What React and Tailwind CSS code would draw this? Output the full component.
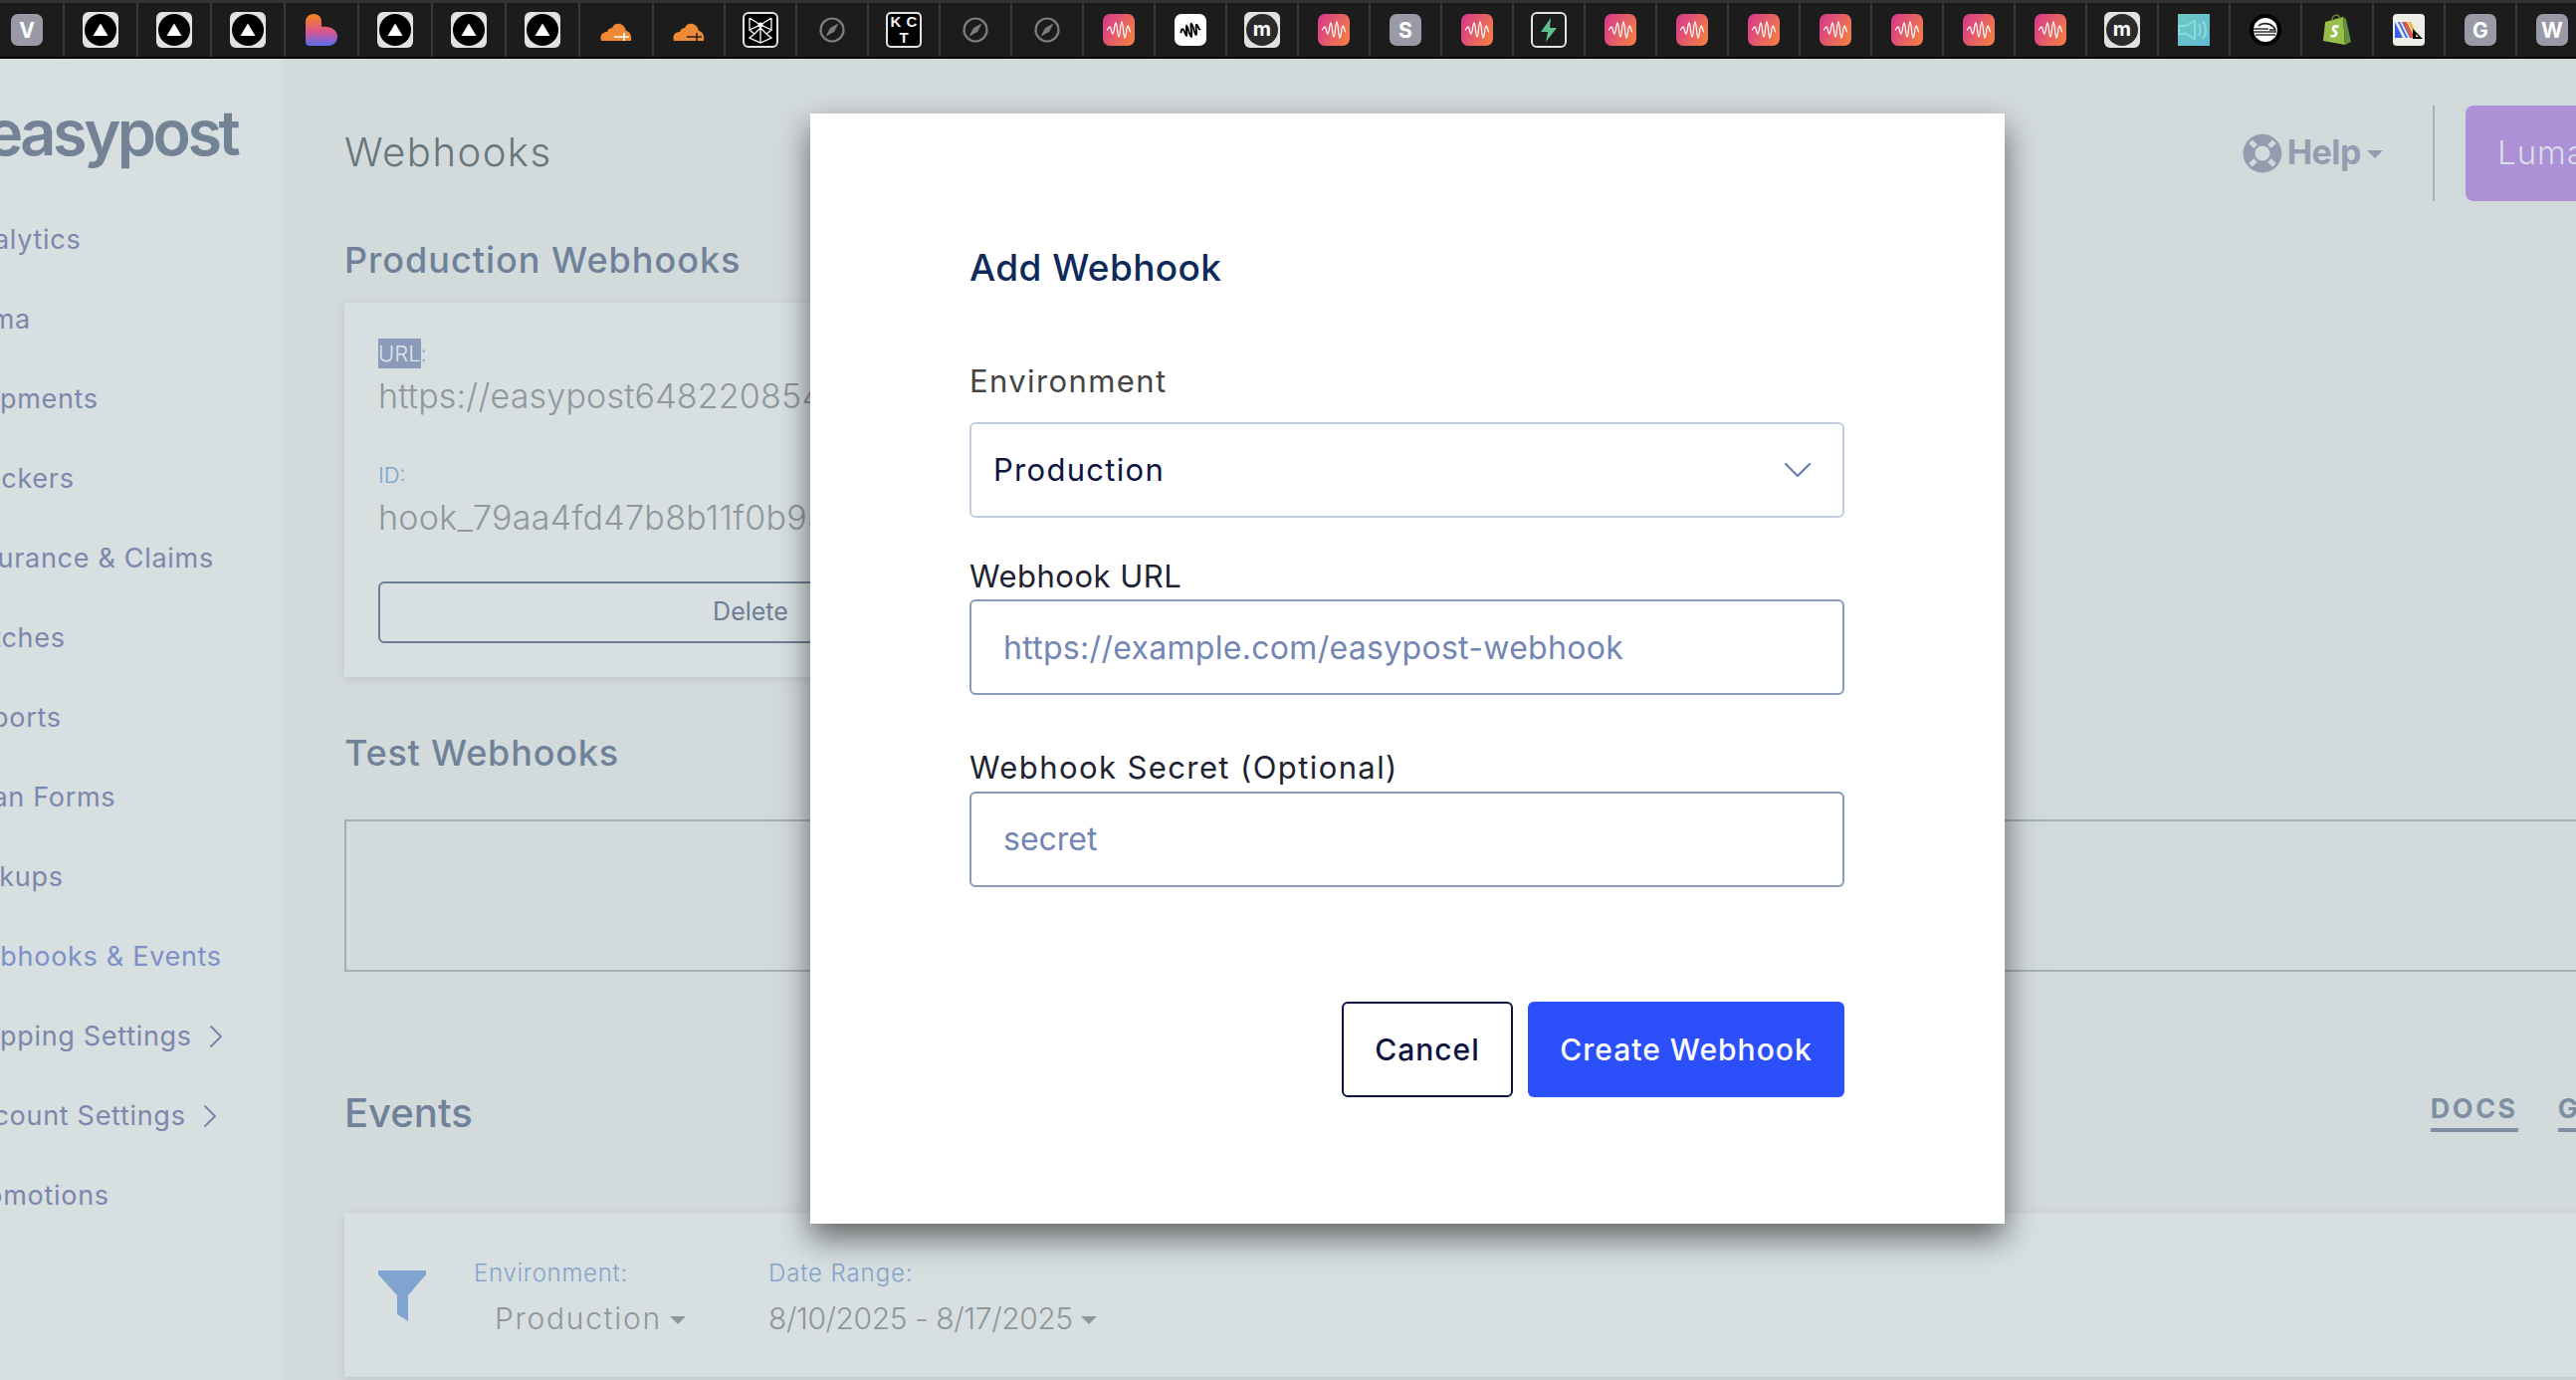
import { ChevronDown, ChevronRight } from "lucide-react";
import { FaLifeRing } from "react-icons/fa";

function NavIcon() {
  return (
    <svg width="36" height="36" viewBox="0 0 36 36">
      <rect width="36" height="36" rx="6" fill="#e2e2e2" />
      <circle cx="18" cy="18" r="16" fill="#000" />
      <path d="M18 11.5 L25.5 24 H10.5 Z" fill="#fff" />
    </svg>
  );
}

function ArcIcon() {
  return (
    <svg width="32" height="32" viewBox="0 0 32 32">
      <defs>
        <linearGradient id="arc" x1="0" y1="0" x2="0" y2="1">
          <stop offset="0.1" stopColor="#f2802b" />
          <stop offset="0.55" stopColor="#d9558f" />
          <stop offset="1" stopColor="#5a6cf0" />
        </linearGradient>
      </defs>
      <path d="M0 8 C0 3 4 0 8 0 C13 0 16 3 16 8 V13 C25 12 32 16 32 23 C32 28 28 32 23 32 H4 Q0 32 0 28 Z" fill="url(#arc)" />
    </svg>
  );
}

function CloudIcon({ mark }) {
  return (
    <svg width="32" height="24" viewBox="0 0 32 24">
      <path d="M1 23 C-1 17 3 14 7 14 C8 11 10 10 12 10 C14 4 24 4 26 13 C29 13 32 17 31 23 Z" fill="#ee8a35" />
      <path d="M14 19 H29 M24 15 V23" stroke={mark} strokeWidth="1.6" fill="none" />
    </svg>
  );
}

function StarIcon() {
  return (
    <svg width="36" height="36" viewBox="0 0 36 36">
      <rect x="1" y="1" width="34" height="34" rx="5" fill="#000" stroke="#e2e2e2" strokeWidth="2" />
      <circle cx="18" cy="13" r="2.5" fill="#fff" />
      <path d="M18 13 V31 M7 6 L18 13 L29 6 M7 6 V18 L18 13 L29 18 V6 M7 18 L12 22 L7 26 L18 31 L29 26 L24 22 L29 18 M12 22 L18 16 L24 22" stroke="#fff" strokeWidth="1.3" fill="none" />
    </svg>
  );
}

function CompassIcon() {
  return (
    <svg width="26" height="26" viewBox="0 0 26 26">
      <circle cx="13" cy="13" r="11.5" fill="none" stroke="#7c7c7c" strokeWidth="2.2" />
      <path d="M19.5 6.5 L15 15 L6.5 19.5 L11 11 Z" fill="#7c7c7c" />
    </svg>
  );
}

function KctIcon() {
  return (
    <div className="w-[36px] h-[36px] bg-black border-2 border-[#e2e2e2] rounded-[5px] grid grid-cols-2 place-items-center text-[#f2f2f2] text-[15px] leading-[14px] font-bold font-[Liberation_Sans,sans-serif]">
      <span>K</span>
      <span>C</span>
      <span className="col-span-2">T</span>
    </div>
  );
}

function WaveLines({ stroke, width }) {
  return (
    <path
      d="M4 16 C5.5 16 5.5 13 7 13 C8.5 13 8.5 20 10 20 C11.5 20 11.5 9 13 9 C14.5 9 14.5 23 16 23 C17.5 23 17.5 8 19 8 C20.5 8 20.5 24 22 24 C23.5 24 23.5 12 25 12 C26.5 12 26.5 18 28 18"
      stroke={stroke}
      strokeWidth={width}
      fill="none"
    />
  );
}

function PinkIcon() {
  return (
    <svg width="32" height="32" viewBox="0 0 32 32">
      <defs>
        <linearGradient id="pink" x1="0" y1="0" x2="1" y2="0.5">
          <stop offset="0" stopColor="#d6358f" />
          <stop offset="1" stopColor="#f0784a" />
        </linearGradient>
      </defs>
      <rect width="32" height="32" rx="7" fill="url(#pink)" />
      <WaveLines stroke="#ffffff" width="1.3" />
    </svg>
  );
}

function WhiteWaveIcon() {
  return (
    <svg width="32" height="32" viewBox="0 0 32 32">
      <rect width="32" height="32" rx="7" fill="#fff" />
      <g transform="rotate(-12 16 16)">
        <path d="M6 17 C7 14 8 13 9 14 C10 15 10 21 11 21 C12 21 12 11 13 11 C14 11 14 23 15.5 23 C17 23 16.5 10 18 10 C19.5 10 19 22 20.5 22 C22 22 21.5 12 23 12 C24.5 12 24 19 26 17" stroke="#000" strokeWidth="1.9" fill="none" />
      </g>
    </svg>
  );
}

function MIcon() {
  return (
    <div className="w-[36px] h-[36px] rounded-[6px] bg-[#e2e2e2] flex items-center justify-center">
      <div className="w-[32px] h-[32px] rounded-full bg-[#2b2b2b] flex items-center justify-center text-white text-[20px] leading-none font-bold pb-[2px]">m</div>
    </div>
  );
}

function LetterIcon({ letter }) {
  return (
    <div className="w-[32px] h-[32px] rounded-[7px] bg-[#9a9aa6] flex items-center justify-center text-white text-[21px] leading-none font-bold">
      {letter}
    </div>
  );
}

function BoltIcon() {
  return (
    <svg width="36" height="36" viewBox="0 0 36 36">
      <rect x="1" y="1" width="34" height="34" rx="5" fill="#1c1c1c" stroke="#e2e2e2" strokeWidth="2" />
      <path d="M20 6 L10 20 H17 L15 30 L26 16 H19 Z" fill="#5cc48b" />
    </svg>
  );
}

function TealIcon() {
  return (
    <svg width="32" height="32" viewBox="0 0 32 32">
      <defs>
        <linearGradient id="teal" x1="0" y1="0" x2="1" y2="1">
          <stop offset="0" stopColor="#6dcabf" />
          <stop offset="1" stopColor="#5fb9d6" />
        </linearGradient>
      </defs>
      <rect width="32" height="32" fill="url(#teal)" />
      <path d="M1 12 H8 L17 7 V25 L8 20 H1 Z" fill="none" stroke="#8fd8d8" strokeWidth="2" />
      <path d="M21 10 C23 13 23 19 21 22 M25 7 C29 12 29 20 25 25" stroke="#8fd8d8" strokeWidth="2" fill="none" />
    </svg>
  );
}

function StripeCircleIcon() {
  return (
    <svg width="32" height="32" viewBox="0 0 32 32">
      <circle cx="16" cy="16" r="16" fill="#000" />
      <circle cx="16" cy="16" r="12" fill="#fff" />
      <path d="M4 15 H19 M4 18 H27 M6 21 H26" stroke="#333" strokeWidth="1.6" />
      <path d="M9 12 C13 8 23 9 26 16 H20" stroke="#222" strokeWidth="1.6" fill="none" />
    </svg>
  );
}

function ShopifyIcon() {
  return (
    <svg width="28" height="32" viewBox="0 0 28 32">
      <path d="M2 8 L20 3 L22 31 L0 27 Z" fill="#95bf47" />
      <path d="M20 3 L23 5 L28 28 L22 31 Z" fill="#5e8e3e" />
      <path d="M9 7 C9 0 16 -1 17 5" stroke="#6d8f33" strokeWidth="1.4" fill="none" />
      <path d="M15.5 13 C11 11 8.5 14.5 11 16.5 C14.5 19 13.5 23.5 7.5 22" stroke="#fff" strokeWidth="2.8" fill="none" />
    </svg>
  );
}

function TriangleIcon() {
  return (
    <svg width="32" height="32" viewBox="0 0 32 32">
      <rect width="32" height="32" rx="4" fill="#eeeee8" />
      <path d="M2 8 L10 24 H2 Z" fill="#3b62e8" />
      <path d="M5 8 H7 L15 24 H13 Z M9 8 H11 L19 24 H17 Z" fill="#3b62e8" />
      <path d="M10 8 H14 L22 24 H18 Z" fill="#e8582f" />
      <path d="M15 8 H18 L24 20 V24 H23 Z" fill="#f0b43c" />
      <path d="M20 15 L30 25 H20 Z M23 20 V23 H26 Z" fill="#000" fillRule="evenodd" />
    </svg>
  );
}

const TABS = [
  <LetterIcon letter="V" />,
  <NavIcon />, <NavIcon />, <NavIcon />,
  <ArcIcon />,
  <NavIcon />, <NavIcon />, <NavIcon />,
  <CloudIcon mark="#fff" />, <CloudIcon mark="#222" />,
  <StarIcon />, <CompassIcon />, <KctIcon />, <CompassIcon />, <CompassIcon />,
  <PinkIcon />, <WhiteWaveIcon />, <MIcon />, <PinkIcon />,
  <LetterIcon letter="S" />,
  <PinkIcon />, <BoltIcon />,
  <PinkIcon />, <PinkIcon />, <PinkIcon />, <PinkIcon />, <PinkIcon />, <PinkIcon />, <PinkIcon />,
  <MIcon />, <TealIcon />, <StripeCircleIcon />, <ShopifyIcon />, <TriangleIcon />,
  <LetterIcon letter="G" />, <LetterIcon letter="W" />,
];

const NAV = [
  "Analytics",
  "Luma",
  "Shipments",
  "Trackers",
  "Insurance & Claims",
  "Batches",
  "Reports",
  "Scan Forms",
  "Pickups",
  "Webhooks & Events",
  "Shipping Settings",
  "Account Settings",
  "Promotions",
];

function TabBar() {
  return (
    <div className="h-[59px] shrink-0 flex bg-[#1c1c1c] border-t-[3px] border-t-[#333333] border-b-2 border-b-black overflow-hidden">
      {TABS.map((icon, i) => (
        <div
          key={i}
          className={`shrink-0 h-full flex items-center border-r-2 border-r-[#383838] ${
            i === 0 ? "w-[65px] pl-[11px]" : i < 9 ? "w-[74px] justify-center" : "w-[72px] justify-center"
          }`}
        >
          {icon}
        </div>
      ))}
    </div>
  );
}

function Sidebar() {
  return (
    <aside className="w-[284px] shrink-0 bg-[#d7dfe1] overflow-hidden">
      <div className="h-[142px] flex items-center -ml-[14px] pt-[6px] text-[63px] leading-none font-semibold tracking-[-3.5px] text-[#748296]">
        easypost
      </div>
      {NAV.map((label) => (
        <div
          key={label}
          className={`h-[80px] -ml-[42px] flex items-center whitespace-nowrap text-[27px] tracking-[0.7px] ${
            label === "Webhooks & Events" ? "text-[#7d90c8]" : "text-[#7a88ab]"
          }`}
        >
          {label}
          {label.endsWith("Settings") && <ChevronRight size={40} strokeWidth={1.2} className="ml-[4px]" />}
        </div>
      ))}
    </aside>
  );
}

function Caret({ className }) {
  return <span className={`inline-block w-0 h-0 border-x-[8px] border-x-transparent border-t-[8px] ${className}`} />;
}

function Main() {
  return (
    <main className="flex-1 min-w-0 pl-[62px] overflow-hidden">
      <div className="mt-[47px] h-[96px] flex items-center">
        <h1 className="text-[40px] font-light tracking-[1.5px] text-[#68767a] -mt-[2px]">Webhooks</h1>
        <div className="ml-auto flex items-center h-full">
          <FaLifeRing size={40} className="text-[#929eb0]" />
          <span className="ml-[5px] -mt-[4px] text-[34px] font-bold text-[#929eb0] tracking-[-0.5px]">Help</span>
          <Caret className="ml-[6px] mt-[2px] border-t-[#929eb0]" />
          <div className="ml-[50px] w-[2px] h-full bg-[#a3b0c2]" />
          <div className="ml-[31px] w-[111px] h-full bg-[#ad90d6] rounded-l-[8px] flex items-center pl-[32px] overflow-hidden text-[33px] tracking-[1px] text-[#d8dfe8] font-light whitespace-nowrap">
            Luma
          </div>
        </div>
      </div>

      <h2 className="mt-[32px] h-[54px] flex items-center text-[36px] font-medium tracking-[1px] text-[#6f8299]">Production Webhooks</h2>

      <div className="mt-[16px] w-[1300px] h-[376px] bg-[#d7dfe1] shadow-[0_2px_8px_rgba(100,110,120,0.18)] pl-[34px] pt-[38px]">
        <div className="h-[30px] flex items-center text-[22px] font-light text-[#7fa3cc] -mt-[2px]">
          <span className="bg-[#8a9ab8] text-[#dfe5ea] h-full flex items-center">URL</span>:
        </div>
        <div className="mt-[4px] h-[46px] flex items-center text-[34px] font-light tracking-[0.2px] text-[#8f979b] whitespace-nowrap">https://easypost648220854</div>
        <div className="mt-[42px] h-[30px] flex items-center text-[22px] font-light text-[#7fa3cc]">ID:</div>
        <div className="mt-[4px] h-[46px] flex items-center text-[34px] font-light tracking-[0.3px] text-[#8f979b] whitespace-nowrap">hook_79aa4fd47b8b11f0b94</div>
        <div className="mt-[42px] w-[748px] h-[62px] border-2 border-[#6d7d93] rounded-[6px] flex items-center justify-center text-[25px] text-[#6d7d93]">
          Delete
        </div>
      </div>

      <h2 className="mt-[49px] h-[54px] flex items-center text-[36px] font-medium tracking-[0.8px] text-[#6f8299]">Test Webhooks</h2>

      <div className="mt-[40px] -mr-[10px] h-[153px] border-2 border-[#a6afb4]" />

      <div className="mt-[115px] h-[54px] flex items-center">
        <h2 className="text-[40px] font-medium text-[#6f8299]">Events</h2>
        <div className="ml-auto -mr-[98px] shrink-0 flex items-start gap-[40px] text-[27px] font-bold tracking-[2.5px] text-[#7f8fa3]">
          <span className="border-b-4 border-[#7f8fa3] leading-[30px] pb-[4px]">DOCS</span>
          <span className="border-b-4 border-[#7f8fa3] leading-[30px] pb-[4px]">GUIDES</span>
        </div>
      </div>

      <div className="mt-[73px] -mr-[10px] h-[165px] bg-[#d7dfe1] shadow-[0_2px_8px_rgba(100,110,120,0.18)] pl-[34px] flex items-start pt-[45px]">
        <svg width="48" height="52" viewBox="0 0 48 52" className="mt-[12px]">
          <path d="M0 1 H48 V5 L30 26 V52 L19 45 V26 L0 5 Z" fill="#81a3cf" />
        </svg>
        <div className="ml-[48px] w-[296px]">
          <div className="h-[32px] flex items-center text-[24px] font-light tracking-[0.7px] text-[#84a4cc]">Environment:</div>
          <div className="mt-[13px] pl-[21px] h-[32px] flex items-center text-[30px] font-light tracking-[1.7px] text-[#8f979b]">
            Production
            <Caret className="ml-[8px] mt-[4px] border-t-[#8f979b]" />
          </div>
        </div>
        <div>
          <div className="h-[32px] flex items-center text-[24px] font-light tracking-[0.9px] text-[#84a4cc]">Date Range:</div>
          <div className="mt-[13px] h-[32px] flex items-center text-[30px] font-light tracking-[-0.4px] text-[#8f979b]">
            8/10/2025 - 8/17/2025
            <Caret className="ml-[8px] mt-[4px] border-t-[#8f979b]" />
          </div>
        </div>
      </div>
    </main>
  );
}

function Modal() {
  return (
    <div className="absolute left-[814px] top-[114px] w-[1200px] h-[1115px] bg-white shadow-[0_14px_30px_rgba(0,0,0,0.55)] pl-[160px] pr-[161px] pt-[131px]">
      <h2 className="h-[48px] text-[37px] leading-[48px] font-medium tracking-[0.4px] text-[#0f2a5a]">Add Webhook</h2>

      <label className="block mt-[68px] h-[44px] leading-[44px] text-[31px] tracking-[1.4px] text-[#444444]">Environment</label>
      <div className="mt-[19px] h-[96px] border-2 border-[#c4cce0] rounded-[6px] flex items-center justify-between pl-[22px] pr-[21px] text-[31px] tracking-[1.3px] text-[#0d1440]">
        Production
        <ChevronDown size={48} strokeWidth={1.2} className="text-[#6f82b0]" />
      </div>

      <label className="block mt-[37px] h-[44px] leading-[44px] text-[31px] tracking-[0.5px] text-[#1d2330]">Webhook URL</label>
      <div className="mt-[1px] h-[96px] border-2 border-[#8a9abb] rounded-[6px] flex items-center pl-[32px] pt-[2px] text-[32px] tracking-[0.3px] text-[#7385b5]">
        https://example.com/easypost-webhook
      </div>

      <label className="block mt-[51px] h-[44px] leading-[44px] text-[31px] tracking-[1.4px] text-[#1d2330]">Webhook Secret (Optional)</label>
      <div className="mt-[2px] h-[96px] border-2 border-[#8a9abb] rounded-[6px] flex items-center pl-[32px] text-[32px] text-[#7385b5]">
        secret
      </div>

      <div className="mt-[115px] flex justify-end gap-[15px]">
        <button className="w-[172px] h-[96px] border-2 border-[#0d1440] rounded-[6px] text-[30px] font-medium tracking-[1px] text-[#0d1440]">Cancel</button>
        <button className="w-[318px] h-[96px] bg-[#2b4ffa] rounded-[6px] text-[30px] font-medium tracking-[1px] text-white">Create Webhook</button>
      </div>
    </div>
  );
}

export default function App() {
  return (
    <div className="relative w-[2588px] h-[1386px] overflow-hidden bg-[#d3dadc] flex flex-col font-[Inter,sans-serif]">
      <TabBar />
      <div className="flex flex-1 min-h-0">
        <Sidebar />
        <Main />
      </div>
      <Modal />
    </div>
  );
}
